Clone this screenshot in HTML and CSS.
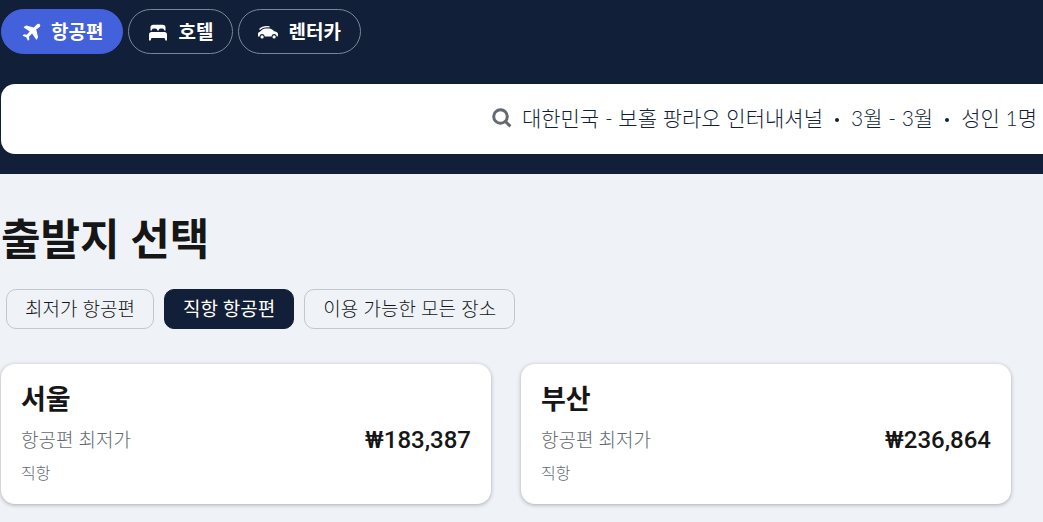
FILE: index.html
```html
<!DOCTYPE html>
<html lang="ko">
<head>
    <meta charset="UTF-8">
    <meta name="viewport" content="width=device-width, initial-scale=1">
    <title>출발지 선택</title>
    <link rel="stylesheet" href="styles.css">
</head>
<body>
    <header class="header">
        <nav class="tabs">
            <a class="tab active" href="#">
                <svg class="icon" viewBox="0 0 20 20"><path d="M18.700 2.300c-.8-.7-2-.6-2.900.3l-3 2.900-7.600-1.900-2.100 1.100c-.5.300-.5.800 0 1.100l5.700 3.800-3.100 3.200-2.400-.5-1.300.8c-.3.300-.3.600.1.800l3.100 1.400 1.500 3c.2.400.5.400.8.100l.9-1.200-.5-2.500 3.200-3.100 3.800 5.700c.3.500.8.500 1.100 0l1.100-2.100-1.900-7.600 3.400-2.500c.9-.9.9-2.200.1-2.800z"/></svg>
                <span>항공편</span>
            </a>
            <a class="tab" href="#">
                <svg class="icon" viewBox="0 0 20 20"><path d="M2.500 8.500V5.500c0-1.800 1-2.800 2.800-2.800h9.400c1.800 0 2.800 1 2.800 2.800v3h-1.300c0-1.300-.8-2-2-2h-1.500c-1.200 0-2 .7-2 2H9.300c0-1.300-.8-2-2-2H5.800c-1.200 0-2 .7-2 2z"/><path d="M3.500 10h13c1.500 0 2.500 1 2.500 2.500v6h-1.500l-1-2.500h-13l-1 2.500H1v-6C1 11 2 10 3.500 10z"/></svg>
                <span>호텔</span>
            </a>
            <a class="tab" href="#">
                <svg class="icon" viewBox="0 0 20 20"><path d="M0 14.500v-2.700c0-1 .5-1.600 1.500-1.900L4.500 7.600c1.100-.8 2.200-1.100 4-1.100h2c1.700 0 2.800.4 4 1.300l1.800 1.400 1.700.5c1.400.4 2 1.300 2 2.700v1.300c0 .6-.3.800-.9.800h-.5a2.500 2.500 0 0 0-5 0H6.600a2.500 2.500 0 0 0-5 0H.5z"/><path d="M1.500 7.500C4 4.800 7 4.200 11.500 4.800" fill="none" stroke="currentColor" stroke-width="1.300"/><circle cx="4.100" cy="14.900" r="1.600"/><circle cx="16.100" cy="14.900" r="1.600"/></svg>
                <span>렌터카</span>
            </a>
        </nav>
        <button class="search" type="button">
            <svg class="search-icon" viewBox="0 0 20 20"><circle cx="8.500" cy="8.500" r="6.800"/><path d="M13.400 13.400l5 5"/></svg>
            <span>대한민국 - 보홀 팡라오 인터내셔널</span>
            <span class="dot"></span>
            <span>3월 - 3월</span>
            <span class="dot"></span>
            <span>성인 1명</span>
        </button>
    </header>

    <main class="main">
        <h1>출발지 선택</h1>
        <div class="chips">
            <button class="chip" type="button">최저가 항공편</button>
            <button class="chip selected" type="button" aria-pressed="true">직항 항공편</button>
            <button class="chip" type="button">이용 가능한 모든 장소</button>
        </div>
        <div class="cards">
            <a class="card" href="#">
                <h2>서울</h2>
                <div class="row">
                    <span>항공편 최저가</span>
                    <strong>₩183,387</strong>
                </div>
                <p>직항</p>
            </a>
            <a class="card" href="#">
                <h2>부산</h2>
                <div class="row">
                    <span>항공편 최저가</span>
                    <strong>₩236,864</strong>
                </div>
                <p>직항</p>
            </a>
        </div>
    </main>
</body>
</html>
```
FILE: styles.css
```css
* {
    box-sizing: border-box;
}
body {
    margin: 0;
    background: #eff3f8;
    color: #161616;
    font-family: Lato, "Noto Sans CJK KR", sans-serif;
    font-size: 19px;
    font-weight: 300;
    overflow-x: hidden;
}
a {
    color: inherit;
    text-decoration: none;
}
button {
    font: inherit;
    cursor: pointer;
}
.header {
    padding: 9px 0 20px 1px;
    background: #121f38;
}
.tabs {
    display: flex;
    gap: 5px;
}
.tab {
    display: flex;
    align-items: center;
    gap: 10px;
    height: 45px;
    padding: 0 19px;
    border: 1px solid #7c8697;
    border-radius: 23px;
    color: #fff;
    font-weight: 700;
    line-height: 24px;
}
.tab.active {
    background: #4361db;
    border-color: #4361db;
}
.icon {
    width: 20px;
    height: 20px;
    fill: currentColor;
}
.search {
    display: flex;
    align-items: center;
    justify-content: flex-end;
    width: 100%;
    height: 70px;
    margin-top: 30px;
    padding: 0 6px 2px 20px;
    border: 0;
    border-radius: 14px 0 0 14px;
    background: #fff;
    color: #121f38;
    font-size: 21px;
    line-height: 30px;
    white-space: nowrap;
}
.search-icon {
    width: 20px;
    height: 20px;
    margin-right: 10px;
    fill: none;
    stroke: #626971;
    stroke-width: 3;
}
.dot {
    width: 4px;
    height: 4px;
    margin: 4px 12px 0;
    border-radius: 50%;
    background: #121f38;
}
.main {
    padding: 34px 32px 18px 1px;
}
h1 {
    margin: 0;
    font-size: 43px;
    line-height: 62px;
}
.chips {
    display: flex;
    gap: 10px;
    margin: 19px 5px 35px;
}
.chip {
    height: 40px;
    padding: 0 18px;
    border: 1px solid #c1c7cf;
    border-radius: 10px;
    background: transparent;
    color: #161616;
    line-height: 38px;
}
.chip.selected {
    background: #121f38;
    border-color: #121f38;
    color: #fff;
    font-weight: 400;
}
.cards {
    display: grid;
    grid-template-columns: 1fr 1fr;
    gap: 30px;
}
.card {
    padding: 17px 20px 18px;
    border-radius: 14px;
    background: #fff;
    box-shadow: 0 1px 4px rgba(0, 0, 0, .3);
}
.card h2 {
    margin: 0;
    font-size: 27px;
    line-height: 36px;
}
.row {
    display: flex;
    align-items: center;
    justify-content: space-between;
    margin-top: 5px;
    color: #626971;
    line-height: 36px;
}
.row strong {
    color: #161616;
    font-family: Roboto, "Noto Sans CJK KR", sans-serif;
    font-size: 24px;
    font-weight: 500;
}
.card p {
    margin: 1px 0 0;
    color: #626971;
    font-size: 16px;
    line-height: 27px;
}
```
